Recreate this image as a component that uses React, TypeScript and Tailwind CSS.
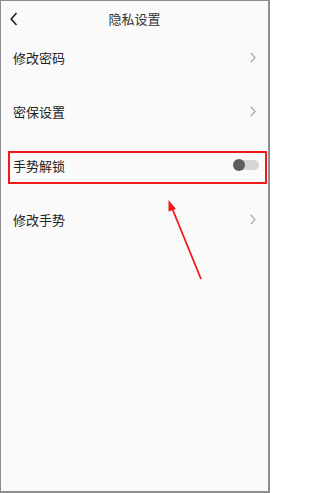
import React, { JSX } from "react";

const rows = [
  { label: "修改密码", type: "link" },
  { label: "密保设置", type: "link" },
  { label: "手势解锁", type: "toggle" },
  { label: "修改手势", type: "link" },
];

const Chevron = (): JSX.Element => (
  <svg width="6" height="11" viewBox="0 0 6 11" fill="none">
    <path d="M0.8 0.8 L5 5.5 L0.8 10.2" stroke="#9a9a9a" strokeWidth="1.1" />
  </svg>
);

export default function App(): JSX.Element {
  return (
    <div className="relative w-[270px] h-[493px] bg-[#fafafa] border-t border-l border-r-2 border-b-2 border-[#8e8e8e] font-['Noto_Sans_CJK_SC',sans-serif] overflow-hidden">
      {/* Header */}
      <div className="relative h-[29px] flex justify-center">
        <svg className="absolute left-[9px] top-[11px]" width="8" height="14" viewBox="0 0 8 14" fill="none">
          <path d="M6.5 1 L1.2 7 L6.5 13" stroke="#222" strokeWidth="1.6" />
        </svg>
        <span className="pt-[8px] text-[13px] leading-[19px] text-[#333]">隐私设置</span>
      </div>

      {/* Rows */}
      <div className="flex flex-col">
        {rows.map((row) => (
          <div key={row.label} className="h-[54px] flex items-center justify-between pl-[12px] pr-[12px]">
            <span className="text-[13px] leading-[19px] text-[#222]">{row.label}</span>
            {row.type === "link" ? (
              <Chevron />
            ) : (
              <div className="relative w-[26px] h-[12px] mr-[-3px]">
                <div className="absolute left-[2px] right-0 top-[1px] h-[10px] rounded-full bg-[#d6d6d6]" />
                <div className="absolute left-0 top-0 w-[12px] h-[12px] rounded-full bg-[#5e5e5e]" />
              </div>
            )}
          </div>
        ))}
      </div>

      {/* Annotation: red box */}
      <div className="absolute left-[7px] top-[150px] w-[259px] h-[33px] border-2 border-[#f01a1a]" />

      {/* Annotation: arrow */}
      <svg className="absolute left-0 top-0" width="270" height="493" viewBox="0 0 270 493" fill="none">
        <line x1="200" y1="278" x2="171" y2="207" stroke="#f01a1a" strokeWidth="1.8" />
        <polygon points="167.5,199 175,208 167.5,210.5" fill="#f01a1a" />
      </svg>
    </div>
  );
}
